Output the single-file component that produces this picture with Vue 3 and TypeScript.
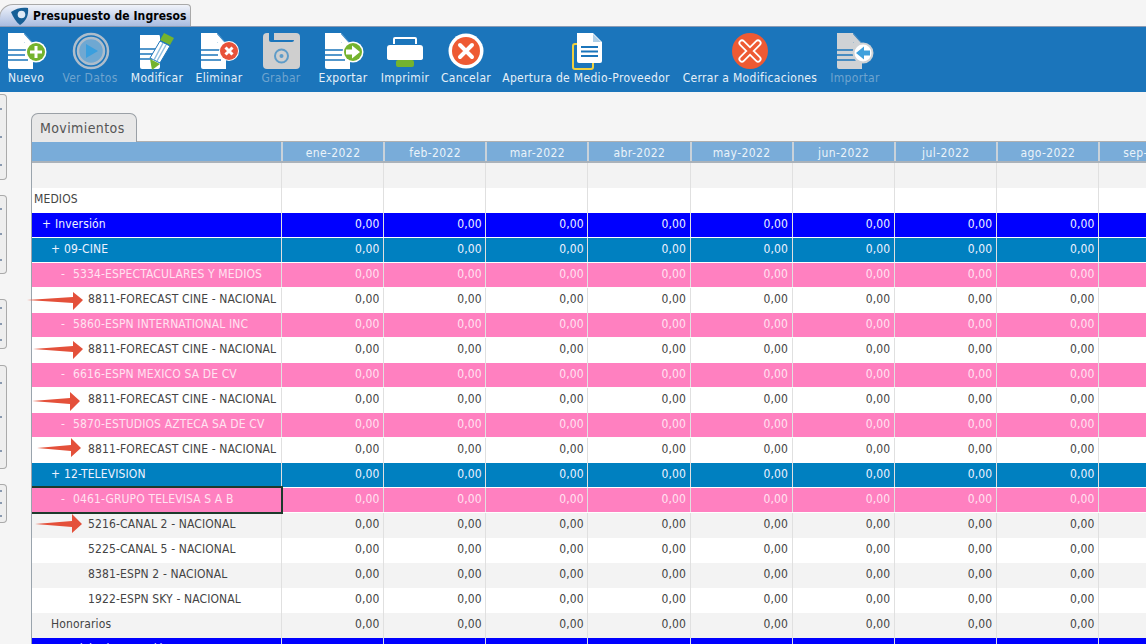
<script setup lang="ts">
interface Tool { label: string; w: number; icon: string; off?: boolean }
interface Row { text: string; sign?: string; kind: string; indent: string; empty?: boolean; sel?: boolean }

const tools: Tool[] = [
  { label: 'Nuevo', w: 52, icon: 'nuevo' },
  { label: 'Ver Datos', w: 76, icon: 'ver', off: true },
  { label: 'Modificar', w: 58, icon: 'mod' },
  { label: 'Eliminar', w: 66, icon: 'del' },
  { label: 'Grabar', w: 58, icon: 'save', off: true },
  { label: 'Exportar', w: 66, icon: 'exp' },
  { label: 'Imprimir', w: 58, icon: 'print' },
  { label: 'Cancelar', w: 64, icon: 'cancel' },
  { label: 'Apertura de Medio-Proveedor', w: 176, icon: 'open' },
  { label: 'Cerrar a Modificaciones', w: 152, icon: 'close' },
  { label: 'Importar', w: 58, icon: 'imp', off: true }
]

const months = ['ene-2022', 'feb-2022', 'mar-2022', 'abr-2022', 'may-2022', 'jun-2022', 'jul-2022', 'ago-2022', 'sep-2022']
const rails = ['r1', 'r2', 'r3', 'r4', 'r5']

const F = '8811-FORECAST CINE - NACIONAL'
const rows: Row[] = [
  { text: '', kind: 'gray', indent: 'i0', empty: true },
  { text: 'MEDIOS', kind: 'white', indent: 'i0', empty: true },
  { text: 'Inversión', sign: '+', kind: 'blue', indent: 'i1' },
  { text: '09-CINE', sign: '+', kind: 'teal', indent: 'i2' },
  { text: '5334-ESPECTACULARES Y MEDIOS', sign: '-', kind: 'pink', indent: 'i3' },
  { text: F, kind: 'white', indent: 'i4' },
  { text: '5860-ESPN INTERNATIONAL INC', sign: '-', kind: 'pink', indent: 'i3' },
  { text: F, kind: 'white', indent: 'i4' },
  { text: '6616-ESPN MEXICO SA DE CV', sign: '-', kind: 'pink', indent: 'i3' },
  { text: F, kind: 'white', indent: 'i4' },
  { text: '5870-ESTUDIOS AZTECA SA DE CV', sign: '-', kind: 'pink', indent: 'i3' },
  { text: F, kind: 'white', indent: 'i4' },
  { text: '12-TELEVISION', sign: '+', kind: 'teal', indent: 'i2' },
  { text: '0461-GRUPO TELEVISA S A B', sign: '-', kind: 'pink', indent: 'i3', sel: true },
  { text: '5216-CANAL 2 - NACIONAL', kind: 'gray', indent: 'i4' },
  { text: '5225-CANAL 5 - NACIONAL', kind: 'white', indent: 'i4' },
  { text: '8381-ESPN 2 - NACIONAL', kind: 'gray', indent: 'i4' },
  { text: '1922-ESPN SKY - NACIONAL', kind: 'white', indent: 'i4' },
  { text: 'Honorarios', kind: 'gray', indent: 'i5' },
  { text: 'Servicio de Inversión', sign: '+', kind: 'blue', indent: 'i1' }
]

const arrows: string[] = [
  '27,300 73,297 73,292 83,300 73,310 73,303',
  '33,349 73,346 73,341 83,349 73,359 73,352',
  '32,401 70,398 70,392 80,401 70,411 70,404',
  '37,448 71,445 71,438 81,448 71,457 71,451',
  '35,524 72,521 72,514 82,524 72,533 72,527'
]
</script>

<template>
  <div class="app">
    <div class="tabbar">
      <div class="apptab">
        <svg class="logo" width="20" height="20" viewBox="0 0 20 20">
          <path d="M1 6 C6 2 13 1 18 2 C19 9 16 15 10 19 C6 16 3 11 1 6 Z" fill="#165f96" />
          <circle cx="11.500" cy="8.500" r="3.800" fill="#dfeaf6" />
        </svg>
        <span>Presupuesto de Ingresos</span>
      </div>
    </div>

    <div class="toolbar">
      <div v-for="t in tools" :key="t.label" class="tool" :class="{ off: t.off }" :style="{ width: t.w + 'px' }">
        <svg class="ico" width="44" height="38" viewBox="0 0 44 38">
          <template v-if="t.icon === 'nuevo' || t.icon === 'exp' || t.icon === 'del' || t.icon === 'imp'">
            <path d="M4 1 H20 L29 11 V37 H6 Q4 37 4 35 Z" :fill="t.icon === 'imp' ? '#cfd2d5' : '#fff'" />
            <path d="M20 1 V11 H29 Z" fill="#1b75bb" />
            <path d="M20 2 L28 11 H21 Q20 11 20 10 Z" :fill="t.icon === 'imp' ? '#cfd2d5' : '#fff'" />
            <path d="M4 18 H24 M4 23 H21 M4 28 H24" stroke="#1b75bb" stroke-width="1.600" />
          </template>
          <template v-if="t.icon === 'nuevo'">
            <circle cx="32" cy="20" r="10.500" fill="#fff" />
            <circle cx="32" cy="20" r="9" fill="#74b32e" />
            <path d="M32 14 V26 M26 20 H38" stroke="#fff" stroke-width="3" />
          </template>
          <template v-if="t.icon === 'del'">
            <circle cx="32" cy="19" r="10" fill="#fff" />
            <circle cx="32" cy="19" r="9" fill="#e8523a" />
            <path d="M28.500 15.500 L35.500 22.500 M35.500 15.500 L28.500 22.500" stroke="#fff" stroke-width="3" />
          </template>
          <template v-if="t.icon === 'exp'">
            <circle cx="32" cy="20" r="10.500" fill="#fff" />
            <circle cx="32" cy="20" r="9" fill="#74b32e" />
            <path d="M25 17.500 H31 V13.500 L39 20 L31 26.500 V22.500 H25 Z" fill="#fff" />
          </template>
          <template v-if="t.icon === 'imp'">
            <circle cx="30" cy="21" r="10.500" fill="#cfd2d5" />
            <circle cx="30" cy="21" r="8.500" fill="#fff" />
            <path d="M37 18.500 H31 V14.500 L23 21 L31 27.500 V23.500 H37 Z" fill="#3ea0dc" />
          </template>
          <template v-if="t.icon === 'ver'">
            <circle cx="23" cy="19" r="17" fill="none" stroke="#aebdcb" stroke-width="2.500" />
            <circle cx="23" cy="19" r="13" fill="#6fa8d2" stroke="#aebdcb" stroke-width="2.500" />
            <path d="M18 12 L30 19 L18 26 Z" fill="#3a9fde" />
          </template>
          <template v-if="t.icon === 'mod'">
            <path d="M5 3 H24 Q25 3 25 5 V35 Q25 37 23 37 H7 Q5 37 5 35 Z" fill="#fff" />
            <path d="M5 17 H21 M5 22 H19 M5 27 H17" stroke="#1b75bb" stroke-width="1.600" />
            <path d="M29 1 L39 6 L35 13 L25 8 Z" fill="#74b32e" />
            <path d="M25 9 L35 14 L25 31 L15 26 Z" fill="#fff" stroke="#1b75bb" stroke-width="1" />
            <path d="M28 11 L19 28 M31 13 L22 29" stroke="#8fbfe0" stroke-width="1.500" />
            <path d="M15 27 L25 32 L17 38 Z" fill="#74b32e" />
          </template>
          <template v-if="t.icon === 'save'">
            <path d="M4 5 Q4 1 8 1 H37 Q41 1 41 5 V33 Q41 37 37 37 H8 Q4 37 4 33 Z" fill="#cfcfcf" />
            <path d="M10 1 V8 Q10 10 12 10 H33 Q35 10 35 8 V1 Z" fill="#1b75bb" />
            <rect x="15" y="1" width="20" height="7" fill="#cfcfcf" />
            <circle cx="22.500" cy="24" r="6.500" fill="none" stroke="#5f9cc8" stroke-width="2" />
            <circle cx="22.500" cy="24" r="2" fill="#5f9cc8" />
          </template>
          <template v-if="t.icon === 'print'">
            <path d="M11 12 V7 Q11 6 12 6 H32 Q33 6 33 7 V12" fill="none" stroke="#fff" stroke-width="2" />
            <path d="M7 13 H37 Q40 13 40 16 V26 Q40 28 37 28 H7 Q4 28 4 26 V16 Q4 13 7 13 Z" fill="#fff" />
            <rect x="13" y="28" width="18" height="7" rx="2" fill="#74b32e" />
          </template>
          <template v-if="t.icon === 'cancel'">
            <circle cx="22" cy="19" r="17.500" fill="#fff" />
            <circle cx="22" cy="19" r="14" fill="#ee5a33" />
            <path d="M16 13 L28 25 M28 13 L16 25" stroke="#fff" stroke-width="4" stroke-linecap="round" />
          </template>
          <template v-if="t.icon === 'open'">
            <rect x="9" y="12" width="20" height="25" rx="2" fill="none" stroke="#f0d040" stroke-width="2" />
            <path d="M13 1 H29 L38 10 V29 Q38 31 36 31 H15 Q13 31 13 29 Z" fill="#fff" />
            <path d="M29 2 L37 10 H29 Z" fill="#1b75bb" fill-opacity="0.35" />
            <path d="M17 15 H34 M17 19.500 H34 M17 24 H34" stroke="#1b75bb" stroke-width="1.800" />
          </template>
          <template v-if="t.icon === 'close'">
            <circle cx="22" cy="19" r="18" fill="#ee5a33" />
            <path d="M14 11 L30 27 M30 11 L14 27" stroke="#fff" stroke-width="7" stroke-linecap="round" />
            <path d="M14 11 L30 27 M30 11 L14 27" stroke="#ee5a33" stroke-width="3.500" stroke-linecap="round" />
          </template>
        </svg>
        <span class="lbl">{{ t.label }}</span>
      </div>
    </div>

    <div class="body">
      <div class="rail">
        <div v-for="r in rails" :key="r" class="railbox" :class="r">
          <i></i><i></i><i></i>
        </div>
      </div>
      <div class="panel">
        <div class="tabrow">
          <div class="subtab">Movimientos</div>
        </div>
        <div class="grid">
          <div class="row head">
            <div class="first"></div>
            <div v-for="m in months" :key="m" class="cell hcell">{{ m }}</div>
          </div>
          <div v-for="(r, i) in rows" :key="i" class="row" :class="r.kind">
            <div class="first" :class="[r.indent, { sel: r.sel }]">
              <span v-if="r.sign" class="sign">{{ r.sign }}</span>{{ r.text }}
            </div>
            <div v-for="m in months" :key="m" class="cell">{{ r.empty ? '' : '0,00' }}</div>
          </div>
        </div>
      </div>
    </div>

    <svg class="marks" width="100" height="644" viewBox="0 0 100 644">
      <polygon v-for="p in arrows" :key="p" :points="p" fill="#e4503a" />
    </svg>
  </div>
</template>

<style>
html, body { margin: 0; background: #f5f5f5; }
</style>

<style scoped>
.app {
  position: relative;
  width: 1146px;
  height: 644px;
  overflow: hidden;
  display: flex;
  flex-direction: column;
  background: #f5f5f5;
  font-family: "DejaVu Sans", "Liberation Sans", sans-serif;
  font-stretch: condensed;
  font-size: 12px;
  letter-spacing: 0.13px;
  color: #444;
}
.tabbar {
  height: 26px;
  flex: none;
  display: flex;
  align-items: flex-end;
  border-bottom: 1px solid #8a9bb5;
  box-sizing: content-box;
}
.apptab {
  width: 192px;
  height: 22px;
  margin-left: -1px;
  box-sizing: border-box;
  display: flex;
  align-items: center;
  gap: 3px;
  padding-left: 10px;
  border: 1px solid #a9a9a9;
  border-bottom: none;
  border-radius: 14px 4px 0 0;
  background: linear-gradient(#f0f3fa, #a9bce0);
  color: #000;
  font-weight: 700;
  font-size: 12px;
  letter-spacing: 0.1px;
  white-space: nowrap;
}
.logo { flex: none; }
.toolbar {
  height: 65px;
  flex: none;
  box-sizing: border-box;
  display: flex;
  padding-top: 5px;
  background: #1b75bb;
}
.tool {
  flex: none;
  display: flex;
  flex-direction: column;
  align-items: center;
  color: #e6f0f8;
}
.tool.off { color: #6ea4cf; }
.ico { flex: none; }
.lbl { line-height: 17px; letter-spacing: 0.32px; white-space: nowrap; }
.body { flex: 1; display: flex; min-height: 0; }
.rail {
  width: 31px;
  flex: none;
  display: flex;
  flex-direction: column;
  padding-top: 2px;
}
.railbox {
  width: 7px;
  box-sizing: border-box;
  border: 1px solid #aaa;
  border-left: none;
  border-radius: 0 4px 4px 0;
  background: #eee;
  display: flex;
  flex-direction: column;
  justify-content: space-around;
}
.railbox i { display: block; width: 2px; height: 2px; background: #8a9ab0; }
.r1 { height: 86px; }
.r2 { height: 79px; margin-top: 15px; }
.r3 { height: 50px; margin-top: 25px; }
.r4 { height: 104px; margin-top: 16px; }
.r5 { height: 39px; margin-top: 15px; }
.panel { flex: 1; min-width: 0; padding-top: 21px; }
.tabrow { height: 28px; display: flex; }
.subtab {
  width: 106px;
  box-sizing: border-box;
  height: 29px;
  padding: 6px 0 0 8px;
  border: 1px solid #9aa0a6;
  border-bottom: none;
  border-radius: 7px 7px 0 0;
  background: #e8e8e8;
  color: #555;
  font-size: 14px;
  letter-spacing: 0.4px;
  position: relative;
  z-index: 1;
}
.grid {
  border-top: 1px solid #b0b0b0;
  border-left: 1px solid #9aa4ad;
  overflow: hidden;
}
.row {
  display: flex;
  height: 25px;
  box-sizing: border-box;
  line-height: 22px;
  white-space: nowrap;
}
.row.head {
  height: 21px;
  background: #79acd9;
  border-bottom: 2px solid #aab2ba;
  color: #eaf3fa;
}
.first {
  width: 249px;
  flex: none;
  box-sizing: border-box;
  position: relative;
}
.cell {
  width: 102.125px;
  flex: none;
  box-sizing: border-box;
  text-align: right;
  padding-right: 3.5px;
  border-left: 1px solid #e0e0e0;
}
.hcell {
  text-align: center;
  padding-right: 0;
  border-left: 2px solid #c9d2da;
  line-height: 22px;
  letter-spacing: 0.4px;
}
.white { background: #fff; }
.gray { background: #f3f3f3; }
.blue, .teal, .pink { color: #eef2ff; border-bottom: 1px solid #fff; }
.blue { background: #0000ff; }
.teal { background: #0080c0; }
.pink { background: #ff80c0; color: #ffe3f1; }
.i0 { padding-left: 2px; }
.i1 { padding-left: 10px; }
.i2 { padding-left: 19px; }
.i3 { padding-left: 29px; }
.i4 { padding-left: 56px; }
.i5 { padding-left: 19px; }
.sign { display: inline-block; width: 13px; }
.i3 .sign { width: 12px; }
.sel {
  outline: 2px solid #1d3a2c;
  outline-offset: 0;
  z-index: 1;
}
.marks {
  position: absolute;
  left: 0;
  top: 0;
  pointer-events: none;
}
</style>
